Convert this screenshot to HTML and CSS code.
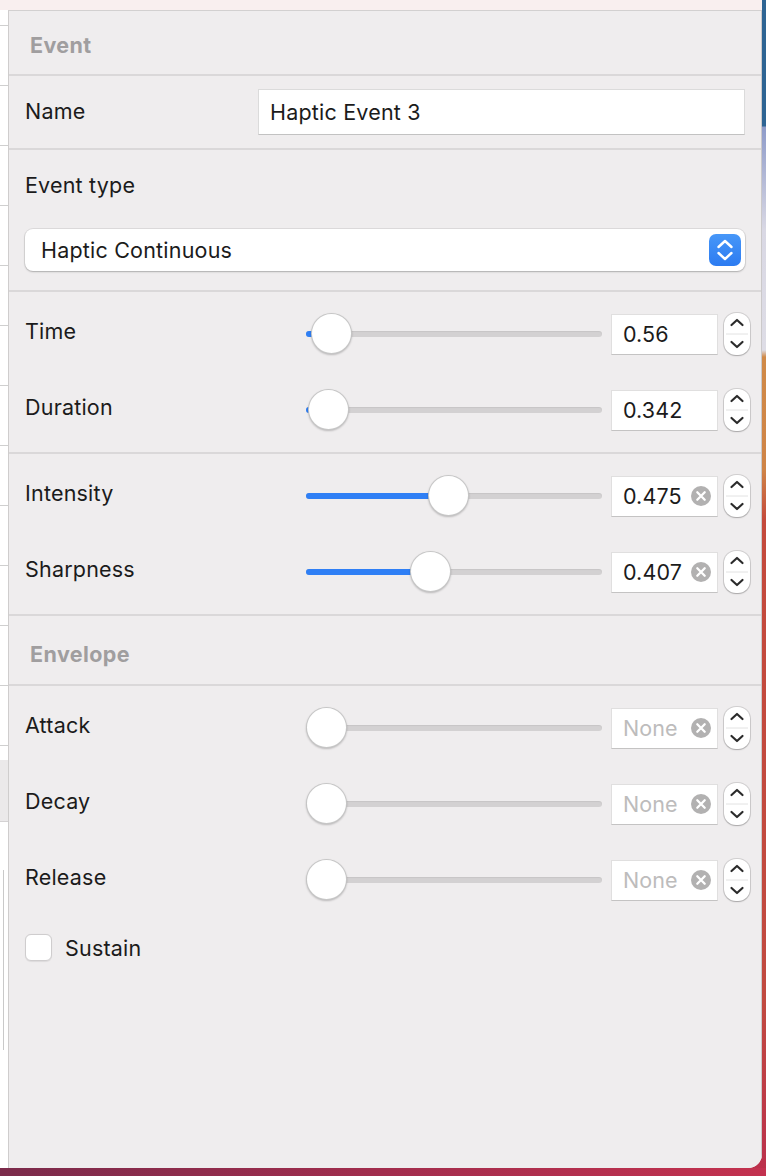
FILE: index.html
```html
<!DOCTYPE html>
<html lang="en">
<head>
<meta charset="utf-8">
<title>Haptic Event Inspector</title>
<link rel="stylesheet" href="styles.css">
</head>
<body>
<div class="screen">
  <div class="topbar"></div>
  <div class="main">
    <div class="backdrop">
      <div class="bd-list"></div>
      <div class="bd-gray"></div>
      <div class="bd-rest"><div class="bd-vline"></div></div>
    </div>
    <div class="panel">
      <div class="sec-header sec-header-event">Event</div>

      <div class="name-row">
        <span class="label">Name</span>
        <div class="text-input">Haptic Event 3</div>
      </div>

      <div class="type-sec">
        <span class="label type-label">Event type</span>
        <div class="select">
          <span>Haptic Continuous</span>
          <span class="select-btn">
            <svg width="16" height="22" viewBox="0 0 16 22"><polyline points="1.5,8 8,2 14.5,8" fill="none" stroke="#fff" stroke-width="2.4" stroke-linecap="round" stroke-linejoin="round"/><polyline points="1.5,14 8,20 14.5,14" fill="none" stroke="#fff" stroke-width="2.4" stroke-linecap="round" stroke-linejoin="round"/></svg>
          </span>
        </div>
      </div>

      <div class="group">
        <div class="srow">
          <span class="label slabel">Time</span>
          <div class="slider"><div class="track"><div class="fill" style="width:25px"></div></div><div class="thumb" style="left:5px"></div></div>
          <div class="num">0.56</div>
          <div class="stepper"><svg width="26" height="42" viewBox="0 0 26 42"><line x1="2" y1="21" x2="24" y2="21" stroke="#e2e2e2" stroke-width="1"/><polyline points="7.5,12 13,7 18.5,12" fill="none" stroke="#2b2b2b" stroke-width="2.2" stroke-linecap="round" stroke-linejoin="round"/><polyline points="7.5,29 13,34 18.5,29" fill="none" stroke="#2b2b2b" stroke-width="2.2" stroke-linecap="round" stroke-linejoin="round"/></svg></div>
        </div>
        <div class="srow">
          <span class="label slabel">Duration</span>
          <div class="slider"><div class="track"><div class="fill" style="width:22px"></div></div><div class="thumb" style="left:2px"></div></div>
          <div class="num">0.342</div>
          <div class="stepper"><svg width="26" height="42" viewBox="0 0 26 42"><line x1="2" y1="21" x2="24" y2="21" stroke="#e2e2e2" stroke-width="1"/><polyline points="7.5,12 13,7 18.5,12" fill="none" stroke="#2b2b2b" stroke-width="2.2" stroke-linecap="round" stroke-linejoin="round"/><polyline points="7.5,29 13,34 18.5,29" fill="none" stroke="#2b2b2b" stroke-width="2.2" stroke-linecap="round" stroke-linejoin="round"/></svg></div>
        </div>
      </div>

      <div class="group">
        <div class="srow">
          <span class="label slabel">Intensity</span>
          <div class="slider"><div class="track"><div class="fill" style="width:142px"></div></div><div class="thumb" style="left:122px"></div></div>
          <div class="num">0.475<span class="clear"><svg width="20" height="20" viewBox="0 0 20 20"><circle cx="10" cy="10" r="10" fill="#b2b1b1"/><path d="M6.3 6.3 L13.7 13.7 M13.7 6.3 L6.3 13.7" stroke="#fff" stroke-width="2.3" stroke-linecap="round"/></svg></span></div>
          <div class="stepper"><svg width="26" height="42" viewBox="0 0 26 42"><line x1="2" y1="21" x2="24" y2="21" stroke="#e2e2e2" stroke-width="1"/><polyline points="7.5,12 13,7 18.5,12" fill="none" stroke="#2b2b2b" stroke-width="2.2" stroke-linecap="round" stroke-linejoin="round"/><polyline points="7.5,29 13,34 18.5,29" fill="none" stroke="#2b2b2b" stroke-width="2.2" stroke-linecap="round" stroke-linejoin="round"/></svg></div>
        </div>
        <div class="srow">
          <span class="label slabel">Sharpness</span>
          <div class="slider"><div class="track"><div class="fill" style="width:124px"></div></div><div class="thumb" style="left:104px"></div></div>
          <div class="num">0.407<span class="clear"><svg width="20" height="20" viewBox="0 0 20 20"><circle cx="10" cy="10" r="10" fill="#b2b1b1"/><path d="M6.3 6.3 L13.7 13.7 M13.7 6.3 L6.3 13.7" stroke="#fff" stroke-width="2.3" stroke-linecap="round"/></svg></span></div>
          <div class="stepper"><svg width="26" height="42" viewBox="0 0 26 42"><line x1="2" y1="21" x2="24" y2="21" stroke="#e2e2e2" stroke-width="1"/><polyline points="7.5,12 13,7 18.5,12" fill="none" stroke="#2b2b2b" stroke-width="2.2" stroke-linecap="round" stroke-linejoin="round"/><polyline points="7.5,29 13,34 18.5,29" fill="none" stroke="#2b2b2b" stroke-width="2.2" stroke-linecap="round" stroke-linejoin="round"/></svg></div>
        </div>
      </div>

      <div class="sec-header sec-header-env">Envelope</div>

      <div class="env">
        <div class="srow">
          <span class="label slabel">Attack</span>
          <div class="slider"><div class="track"></div><div class="thumb" style="left:0"></div></div>
          <div class="num placeholder">None<span class="clear"><svg width="20" height="20" viewBox="0 0 20 20"><circle cx="10" cy="10" r="10" fill="#b2b1b1"/><path d="M6.3 6.3 L13.7 13.7 M13.7 6.3 L6.3 13.7" stroke="#fff" stroke-width="2.3" stroke-linecap="round"/></svg></span></div>
          <div class="stepper"><svg width="26" height="42" viewBox="0 0 26 42"><line x1="2" y1="21" x2="24" y2="21" stroke="#e2e2e2" stroke-width="1"/><polyline points="7.5,12 13,7 18.5,12" fill="none" stroke="#2b2b2b" stroke-width="2.2" stroke-linecap="round" stroke-linejoin="round"/><polyline points="7.5,29 13,34 18.5,29" fill="none" stroke="#2b2b2b" stroke-width="2.2" stroke-linecap="round" stroke-linejoin="round"/></svg></div>
        </div>
        <div class="srow">
          <span class="label slabel">Decay</span>
          <div class="slider"><div class="track"></div><div class="thumb" style="left:0"></div></div>
          <div class="num placeholder">None<span class="clear"><svg width="20" height="20" viewBox="0 0 20 20"><circle cx="10" cy="10" r="10" fill="#b2b1b1"/><path d="M6.3 6.3 L13.7 13.7 M13.7 6.3 L6.3 13.7" stroke="#fff" stroke-width="2.3" stroke-linecap="round"/></svg></span></div>
          <div class="stepper"><svg width="26" height="42" viewBox="0 0 26 42"><line x1="2" y1="21" x2="24" y2="21" stroke="#e2e2e2" stroke-width="1"/><polyline points="7.5,12 13,7 18.5,12" fill="none" stroke="#2b2b2b" stroke-width="2.2" stroke-linecap="round" stroke-linejoin="round"/><polyline points="7.5,29 13,34 18.5,29" fill="none" stroke="#2b2b2b" stroke-width="2.2" stroke-linecap="round" stroke-linejoin="round"/></svg></div>
        </div>
        <div class="srow">
          <span class="label slabel">Release</span>
          <div class="slider"><div class="track"></div><div class="thumb" style="left:0"></div></div>
          <div class="num placeholder">None<span class="clear"><svg width="20" height="20" viewBox="0 0 20 20"><circle cx="10" cy="10" r="10" fill="#b2b1b1"/><path d="M6.3 6.3 L13.7 13.7 M13.7 6.3 L6.3 13.7" stroke="#fff" stroke-width="2.3" stroke-linecap="round"/></svg></span></div>
          <div class="stepper"><svg width="26" height="42" viewBox="0 0 26 42"><line x1="2" y1="21" x2="24" y2="21" stroke="#e2e2e2" stroke-width="1"/><polyline points="7.5,12 13,7 18.5,12" fill="none" stroke="#2b2b2b" stroke-width="2.2" stroke-linecap="round" stroke-linejoin="round"/><polyline points="7.5,29 13,34 18.5,29" fill="none" stroke="#2b2b2b" stroke-width="2.2" stroke-linecap="round" stroke-linejoin="round"/></svg></div>
        </div>
        <div class="check-row">
          <span class="checkbox"></span>
          <span class="label">Sustain</span>
        </div>
      </div>
    </div>
  </div>
</div>
<div class="bottom"></div>
</body>
</html>
```

FILE: styles.css
```css
* { box-sizing: border-box; }

html, body { margin: 0; padding: 0; }

body {
  width: 766px;
  height: 1176px;
  overflow: hidden;
  font-family: Inter, "Liberation Sans", "DejaVu Sans", sans-serif;
  color: #1d1d1d;
  background: linear-gradient(to bottom,
    #2e6493 0, #2e6493 126px, #8e9bc9 127px, #d9d8e4 230px, #dedde6 350px,
    #d08a48 357px, #cf8447 470px, #c44a3c 520px, #c14a40 1000px, #bb2f4c 1176px);
}

.screen {
  width: 762px;
  height: 1168px;
  display: flex;
  flex-direction: column;
  border-bottom-right-radius: 14px;
  overflow: hidden;
  background: #efedee;
}

.topbar {
  height: 10px;
  flex: none;
  background: #f9efef;
}

.main {
  flex: 1;
  display: flex;
  min-height: 0;
}

.backdrop {
  width: 8px;
  flex: none;
  display: flex;
  flex-direction: column;
  background: #ffffff;
}

.bd-list {
  height: 750px;
  background-image: linear-gradient(to bottom,
    transparent 0, transparent 15px, #cfcfcf 15px, #cfcfcf 16px, transparent 16px, transparent 60px);
  background-size: 8px 60px;
  background-repeat: repeat-y;
}

.bd-gray {
  height: 62px;
  background: #ebe9ea;
  border-bottom: 1px solid #d4d2d3;
}

.bd-rest {
  flex: 1;
  padding: 48px 0 0 3px;
}

.bd-vline {
  width: 1px;
  height: 180px;
  background: #c9c9c9;
}

.panel {
  flex: 1;
  display: flex;
  flex-direction: column;
  background: #efedee;
  border-top: 1px solid #d2d0d0;
  border-left: 1px solid #cfcdcd;
  border-right: 1px solid #cbc9ca;
}

.label {
  font-size: 21.5px;
  letter-spacing: 0.2px;
  line-height: 26px;
  color: #1b1b1b;
}

.sec-header {
  flex: none;
  display: flex;
  align-items: center;
  padding-left: 21px;
  font-size: 21.5px;
  letter-spacing: 0.4px;
  font-weight: 700;
  color: #a09e9f;
  border-bottom: 2px solid #dad8d9;
}

.sec-header-event {
  height: 65px;
  padding-top: 4px;
}

.sec-header-env {
  height: 70px;
  padding-top: 8px;
}

.name-row {
  flex: none;
  height: 74px;
  display: grid;
  grid-template-columns: 233px 1fr;
  align-items: center;
  padding: 0 16px;
  border-bottom: 2px solid #dad8d9;
}

.name-row .label {
  padding-bottom: 3px;
}

.text-input {
  height: 46px;
  display: flex;
  align-items: center;
  padding-left: 11px;
  font-size: 21.5px;
  letter-spacing: 0.2px;
  background: #ffffff;
  border: 1px solid #dbdbdb;
  border-bottom-color: #c2c2c2;
  color: #1b1b1b;
}

.type-sec {
  flex: none;
  height: 142px;
  display: flex;
  flex-direction: column;
  padding: 22px 16px 0;
  border-bottom: 2px solid #dad8d9;
}

.type-label {
  margin-bottom: 31px;
}

.select {
  height: 42px;
  display: flex;
  align-items: center;
  justify-content: space-between;
  padding: 0 4px 0 16px;
  font-size: 21.5px;
  letter-spacing: 0.2px;
  background: #ffffff;
  border-radius: 8px;
  box-shadow: 0 0 0 1px rgba(0, 0, 0, 0.07), 0 1px 2px rgba(0, 0, 0, 0.22);
  color: #1b1b1b;
}

.select-btn {
  width: 32px;
  height: 32px;
  display: flex;
  align-items: center;
  justify-content: center;
  border-radius: 7px;
  background: linear-gradient(to bottom, #4797f8, #2c7bf1);
}

.group {
  flex: none;
  height: 162px;
  padding: 4px 0;
  border-bottom: 2px solid #dad8d9;
}

.env {
  flex: 1;
  padding: 4px 0 0;
}

.srow {
  height: 76px;
  display: grid;
  grid-template-columns: 281px 296px 116px 32px;
  align-items: center;
  padding: 0 11px 0 16px;
}

.srow .num {
  margin-left: 9px;
}

.srow .stepper {
  margin-left: 6px;
}

.slabel {
  padding-bottom: 7px;
}

.slider {
  position: relative;
  height: 42px;
  display: flex;
  align-items: center;
}

.track {
  position: relative;
  width: 100%;
  height: 6px;
  border-radius: 3px;
  background: #d3d1d2;
  box-shadow: inset 0 1px 1px rgba(0, 0, 0, 0.06);
}

.fill {
  height: 6px;
  border-radius: 3px;
  background: #2f7ff5;
}

.thumb {
  position: absolute;
  top: 0;
  width: 41px;
  height: 41px;
  border-radius: 50%;
  background: #ffffff;
  border: 1px solid rgba(0, 0, 0, 0.22);
  box-shadow: 0 1px 2px rgba(0, 0, 0, 0.22);
}

.num {
  position: relative;
  width: 107px;
  height: 41px;
  display: flex;
  align-items: center;
  justify-content: space-between;
  padding: 0 6px 0 11px;
  font-size: 21.5px;
  letter-spacing: 0.1px;
  background: #ffffff;
  border: 1px solid #e0dfdf;
  border-bottom-color: #c4c3c3;
  color: #1b1b1b;
}

.num.placeholder {
  color: #bdbcbc;
}

.clear {
  width: 20px;
  height: 20px;
  display: flex;
}

.stepper {
  width: 26px;
  height: 42px;
  display: flex;
  background: #ffffff;
  border-radius: 12px;
  box-shadow: 0 0 0 1px rgba(0, 0, 0, 0.12), 0 1px 1.5px rgba(0, 0, 0, 0.2);
}

.check-row {
  display: flex;
  align-items: center;
  gap: 13px;
  padding: 16px 16px 0;
}

.checkbox {
  width: 27px;
  height: 27px;
  border-radius: 6px;
  background: #ffffff;
  border: 1px solid #cfcdce;
  box-shadow: 0 0.5px 1px rgba(0, 0, 0, 0.08);
}

.bottom {
  width: 766px;
  height: 8px;
  background: linear-gradient(to right, #7b2b4b, #a22d4d 50%, #c3324f);
}
```
